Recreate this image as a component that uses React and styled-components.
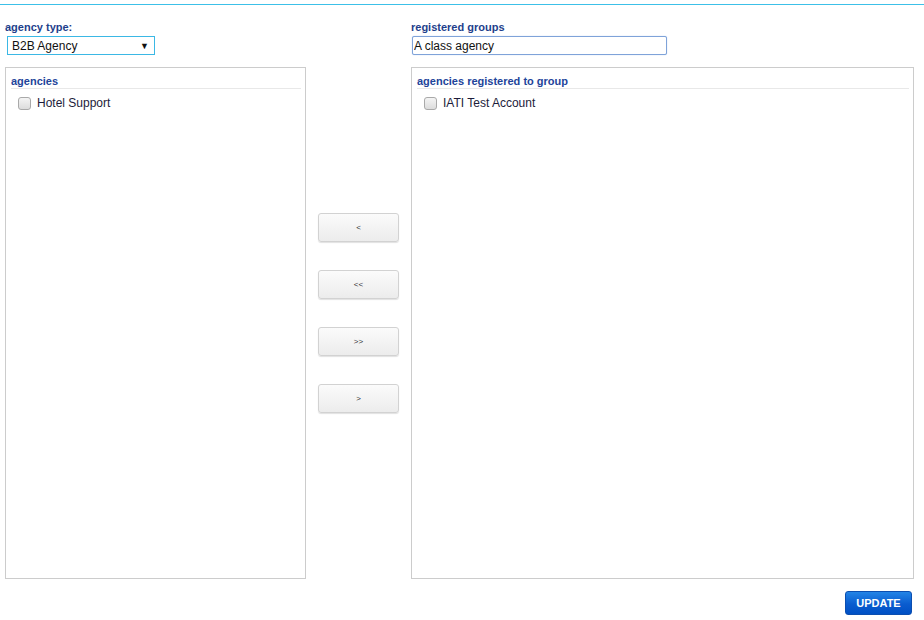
import React from "react";
import styled, { createGlobalStyle } from "styled-components";

const Global = createGlobalStyle`
  html, body { margin: 0; padding: 0; background: #fff; }
  body { font-family: "Liberation Sans", Arial, sans-serif; }
  * { box-sizing: border-box; }
`;

const TopLine = styled.div`
  height: 5px;
  border-bottom: 1px solid #3cc0e8;
`;

const Layout = styled.div`
  display: grid;
  grid-template-columns: 301px 105px 503px;
  grid-template-rows: auto 512px auto;
  margin-left: 5px;
  padding-top: 15px;
`;

const Field = styled.div`
  display: flex;
  flex-direction: column;
  align-items: flex-start;
  height: 47px;
`;

const Label = styled.label`
  font-size: 11px;
  font-weight: bold;
  color: #1e3f8c;
  line-height: 14px;
  height: 16px;
`;

const SelectBox = styled.div`
  margin-left: 2px;
  width: 148px;
  height: 19px;
  border: 1px solid #3bb8e5;
  display: flex;
  align-items: center;
  justify-content: space-between;
  padding: 0 5px 0 4px;
  font-size: 12px;
  color: #111;
  cursor: default;
`;

const Arrow = styled.span`
  font-size: 9px;
  color: #111;
`;

const TextInput = styled.input`
  margin-left: 1px;
  width: 255px;
  height: 19px;
  border: 1px solid #7fa3d9;
  border-radius: 2px;
  box-shadow: 0 0 1px #9bbbe8;
  padding: 0 1px;
  font-family: "Liberation Sans", Arial, sans-serif;
  font-size: 12px;
  color: #111;
  outline: none;
`;

const Panel = styled.div`
  border: 1px solid #cccccc;
  padding: 0 4px 0 5px;
  background: #fff;
`;

const PanelTitle = styled.div`
  font-size: 11px;
  font-weight: bold;
  color: #22449a;
  line-height: 13px;
  padding-top: 7px;
  border-bottom: 1px solid #e8e8e8;
`;

const Item = styled.label`
  display: flex;
  align-items: center;
  gap: 6px;
  padding-left: 7px;
  margin-top: 7px;
  font-size: 12px;
  color: #1c1c3a;
  line-height: 14px;
`;

const Check = styled.span`
  width: 13px;
  height: 13px;
  border: 1px solid #a9a9a9;
  border-radius: 3px;
  background: linear-gradient(#f4f4f4, #dcdcdc);
  display: inline-block;
`;

const Middle = styled.div`
  display: flex;
  flex-direction: column;
  align-items: center;
  padding-top: 146px;
  gap: 28px;
`;

const MoveButton = styled.button`
  width: 81px;
  height: 29px;
  border: 1px solid #d2d2d2;
  border-radius: 3px;
  background: linear-gradient(#fbfbfb, #ececec);
  box-shadow: 0 1px 1px rgba(0, 0, 0, 0.12);
  font-family: "Liberation Sans", Arial, sans-serif;
  font-size: 8px;
  color: #333;
  padding: 0;
  cursor: pointer;
`;

const Footer = styled.div`
  grid-column: 1 / 4;
  display: flex;
  justify-content: flex-end;
  padding-top: 12px;
  padding-right: 2px;
`;

const UpdateButton = styled.button`
  width: 67px;
  height: 24px;
  border: 1px solid #0b4eb0;
  border-radius: 3px;
  background: linear-gradient(#2384e6, #0a5ccf 55%, #0050c4);
  color: #fff;
  font-family: "Liberation Sans", Arial, sans-serif;
  font-size: 11px;
  font-weight: bold;
  padding: 0;
  cursor: pointer;
`;

export default function App() {
  return (
    <>
      <Global />
      <TopLine />
      <Layout>
        <Field>
          <Label>agency type:</Label>
          <SelectBox>
            <span>B2B Agency</span>
            <Arrow>▼</Arrow>
          </SelectBox>
        </Field>
        <div />
        <Field>
          <Label>registered groups</Label>
          <TextInput defaultValue="A class agency" />
        </Field>

        <Panel>
          <PanelTitle>agencies</PanelTitle>
          <Item>
            <Check />
            Hotel Support
          </Item>
        </Panel>
        <Middle>
          <MoveButton>&lt;</MoveButton>
          <MoveButton>&lt;&lt;</MoveButton>
          <MoveButton>&gt;&gt;</MoveButton>
          <MoveButton>&gt;</MoveButton>
        </Middle>
        <Panel>
          <PanelTitle>agencies registered to group</PanelTitle>
          <Item>
            <Check />
            IATI Test Account
          </Item>
        </Panel>

        <Footer>
          <UpdateButton>UPDATE</UpdateButton>
        </Footer>
      </Layout>
    </>
  );
}
